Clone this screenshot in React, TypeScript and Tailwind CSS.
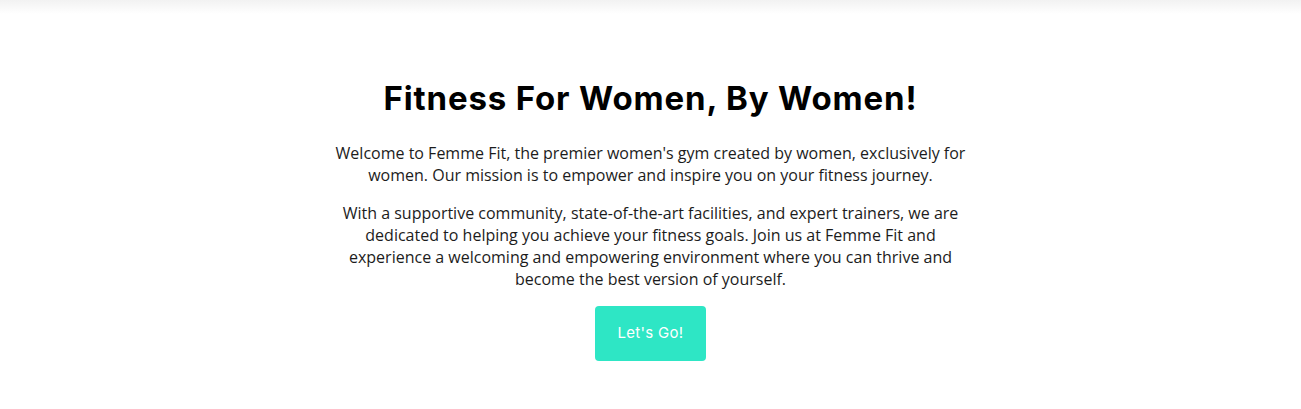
import React from 'react';

const App: React.FC = () => {
  return (
    <div className="min-h-[409px] w-full bg-white relative">
      <div className="absolute top-0 left-0 right-0 h-[14px] bg-gradient-to-b from-[#f2f2f2] to-white"></div>
      <section className="flex flex-col items-center pt-[77px] px-4 text-center">
        <h1 className="text-[33px] font-bold text-black tracking-[0.85px] leading-[42px] mb-[23px]" style={{ fontFamily: 'Inter, "Liberation Sans", sans-serif' }}>
          Fitness For Women, By Women!
        </h1>
        <div className="max-w-[640px] text-[#1c1c1c] text-[16px] leading-[22px]" style={{ fontFamily: '"Open Sans", sans-serif' }}>
          <p className="mb-[16px]">
            Welcome to Femme Fit, the premier women's gym created by women, exclusively for women. Our mission is to empower and inspire you on your fitness journey.
          </p>
          <p>
            With a supportive community, state-of-the-art facilities, and expert trainers, we are dedicated to helping you achieve your fitness goals. Join us at Femme Fit and experience a welcoming and empowering environment where you can thrive and become the best version of yourself.
          </p>
        </div>
        <button className="mt-[16px] w-[111px] h-[55px] bg-[#2ee6c5] text-white rounded-[4px] text-[15px] tracking-[0.3px]" style={{ fontFamily: 'Inter, "Liberation Sans", sans-serif' }}>
          Let's Go!
        </button>
      </section>
    </div>
  );
};

export default App;
